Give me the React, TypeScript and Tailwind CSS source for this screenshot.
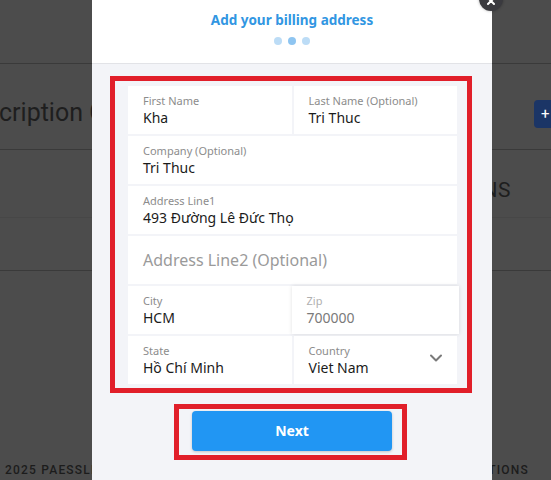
import React from "react";

const font = { fontFamily: '"Noto Sans", "Open Sans", sans-serif' };

function Field({
  label,
  value,
  muted,
  shadow,
  chevron,
}: {
  label: string;
  value: string;
  muted?: boolean;
  shadow?: boolean;
  chevron?: boolean;
}) {
  return (
    <div
      className={`relative h-[48px] bg-white pl-[15px] pt-[7px] ${
        shadow ? "-mx-[2px] px-[17px] shadow-[0_0_4px_rgba(0,0,0,0.12)]" : ""
      }`}
    >
      <div
        className={`text-[11px] leading-[15px] ${
          muted ? "text-[#b0b0b0]" : "text-[#8c8c8c]"
        }`}
      >
        {label}
      </div>
      <div
        className={`mt-[1px] text-[14px] leading-[18px] ${
          muted ? "text-[#7a7a7a]" : "text-[#1b1b1b]"
        }`}
      >
        {value}
      </div>
      {chevron && (
        <svg
          className="absolute right-[14px] top-[17px]"
          width="14"
          height="10"
          viewBox="0 0 14 10"
          fill="none"
        >
          <path
            d="M2 2.5 L7 7.5 L12 2.5"
            stroke="#7a7a7a"
            strokeWidth="2"
            strokeLinecap="round"
            strokeLinejoin="round"
          />
        </svg>
      )}
    </div>
  );
}

export default function App() {
  return (
    <div
      className="relative h-[480px] w-[551px] overflow-hidden bg-[#4c4c4c]"
      style={{ fontFamily: 'Roboto, "Noto Sans", sans-serif' }}
    >
      {/* background page (dimmed) */}
      <div className="flex h-full flex-col">
        <div className="h-[64px] border-b border-[#3a3a3a]" />
        <div className="flex h-[86px] items-start justify-between border-b border-[#3a3a3a]">
          <div className="ml-[-1px] mt-[34px] text-[25px] leading-[30px] text-[#1e1e1e]">
            cription C
          </div>
          <div className="mt-[36px] flex h-[28px] w-[17px] items-center rounded-l-[4px] bg-[#1b3566] pl-[7px] text-[15px] leading-none text-white">
            +
          </div>
        </div>
        <div className="flex h-[68px] items-center justify-end border-b border-[#474747] pr-[40px] pt-[12px]">
          <div className="text-[21px] leading-[26px] tracking-[0.5px] text-[#1e1e1e]">
            TRANSACTIONS
          </div>
        </div>
        <div className="h-[53px] border-b border-[#3a3a3a]" />
        <div className="flex-1" />
        <div className="flex h-[20px] items-center justify-between pl-[5px] pr-[22px] text-[12px] font-medium tracking-[1.2px] text-[#1c1c1c]">
          <span>2025 PAESSLER AG</span>
          <span>TERMS AND CONDITIONS</span>
        </div>
      </div>

      {/* modal */}
      <div className="absolute left-[92px] top-0 flex h-[520px] w-[400px] flex-col bg-[#f3f4f8]" style={font}>
        <div className="flex h-[64px] flex-col items-center border-b border-[#e2e3e7] bg-white">
          <div className="mt-[10px] text-[13.5px] font-bold leading-[20px] text-[#3196e2]">
            Add your billing address
          </div>
          <div className="mt-[7px] flex gap-[6px]">
            <span className="h-[8px] w-[8px] rounded-full bg-[#bcdcf6]" />
            <span className="h-[8px] w-[8px] rounded-full bg-[#8ec5f1]" />
            <span className="h-[8px] w-[8px] rounded-full bg-[#bcdcf6]" />
          </div>
        </div>

        <div className="ml-[18px] mt-[12px] w-[362px] border-[5px] border-[#e11f2a] pb-[4px] pl-[13px] pr-[10px] pt-[5px]">
          <div className="grid grid-cols-2 gap-[2px]">
            <Field label="First Name" value="Kha" />
            <Field label="Last Name (Optional)" value="Tri Thuc" />
            <div className="col-span-2">
              <Field label="Company (Optional)" value="Tri Thuc" />
            </div>
            <div className="col-span-2">
              <Field label="Address Line1" value="493 Đường Lê Đức Thọ" />
            </div>
            <div className="col-span-2 flex h-[48px] items-center bg-white pl-[15px] text-[16px] text-[#9a9a9a]">
              Address Line2 (Optional)
            </div>
            <Field label="City" value="HCM" />
            <Field label="Zip" value="700000" muted shadow />
            <Field label="State" value="Hồ Chí Minh" />
            <Field label="Country" value="Viet Nam" chevron />
          </div>
        </div>

        <div className="ml-[82px] mt-[11px] w-[233px] border-[5px] border-[#e11f2a] pb-[4px] pl-[13px] pr-[10px] pt-[2px]">
          <button className="flex h-[40px] w-[200px] items-center justify-center rounded-[4px] bg-[#2196f3] pb-[2px] text-[14px] font-bold text-white shadow-[0_1px_3px_rgba(0,0,0,0.2)]">
            Next
          </button>
        </div>
      </div>

      {/* close button */}
      <div className="absolute left-[479px] top-[-13px] flex h-[24px] w-[24px] items-center justify-center rounded-full bg-[#3a3a3f] shadow-[0_0_3px_rgba(0,0,0,0.3)]">
        <svg width="10" height="10" viewBox="0 0 10 10" className="mt-[4px]">
          <path d="M2 2 L8 8 M8 2 L2 8" stroke="white" strokeWidth="2" strokeLinecap="round" />
        </svg>
      </div>
    </div>
  );
}
